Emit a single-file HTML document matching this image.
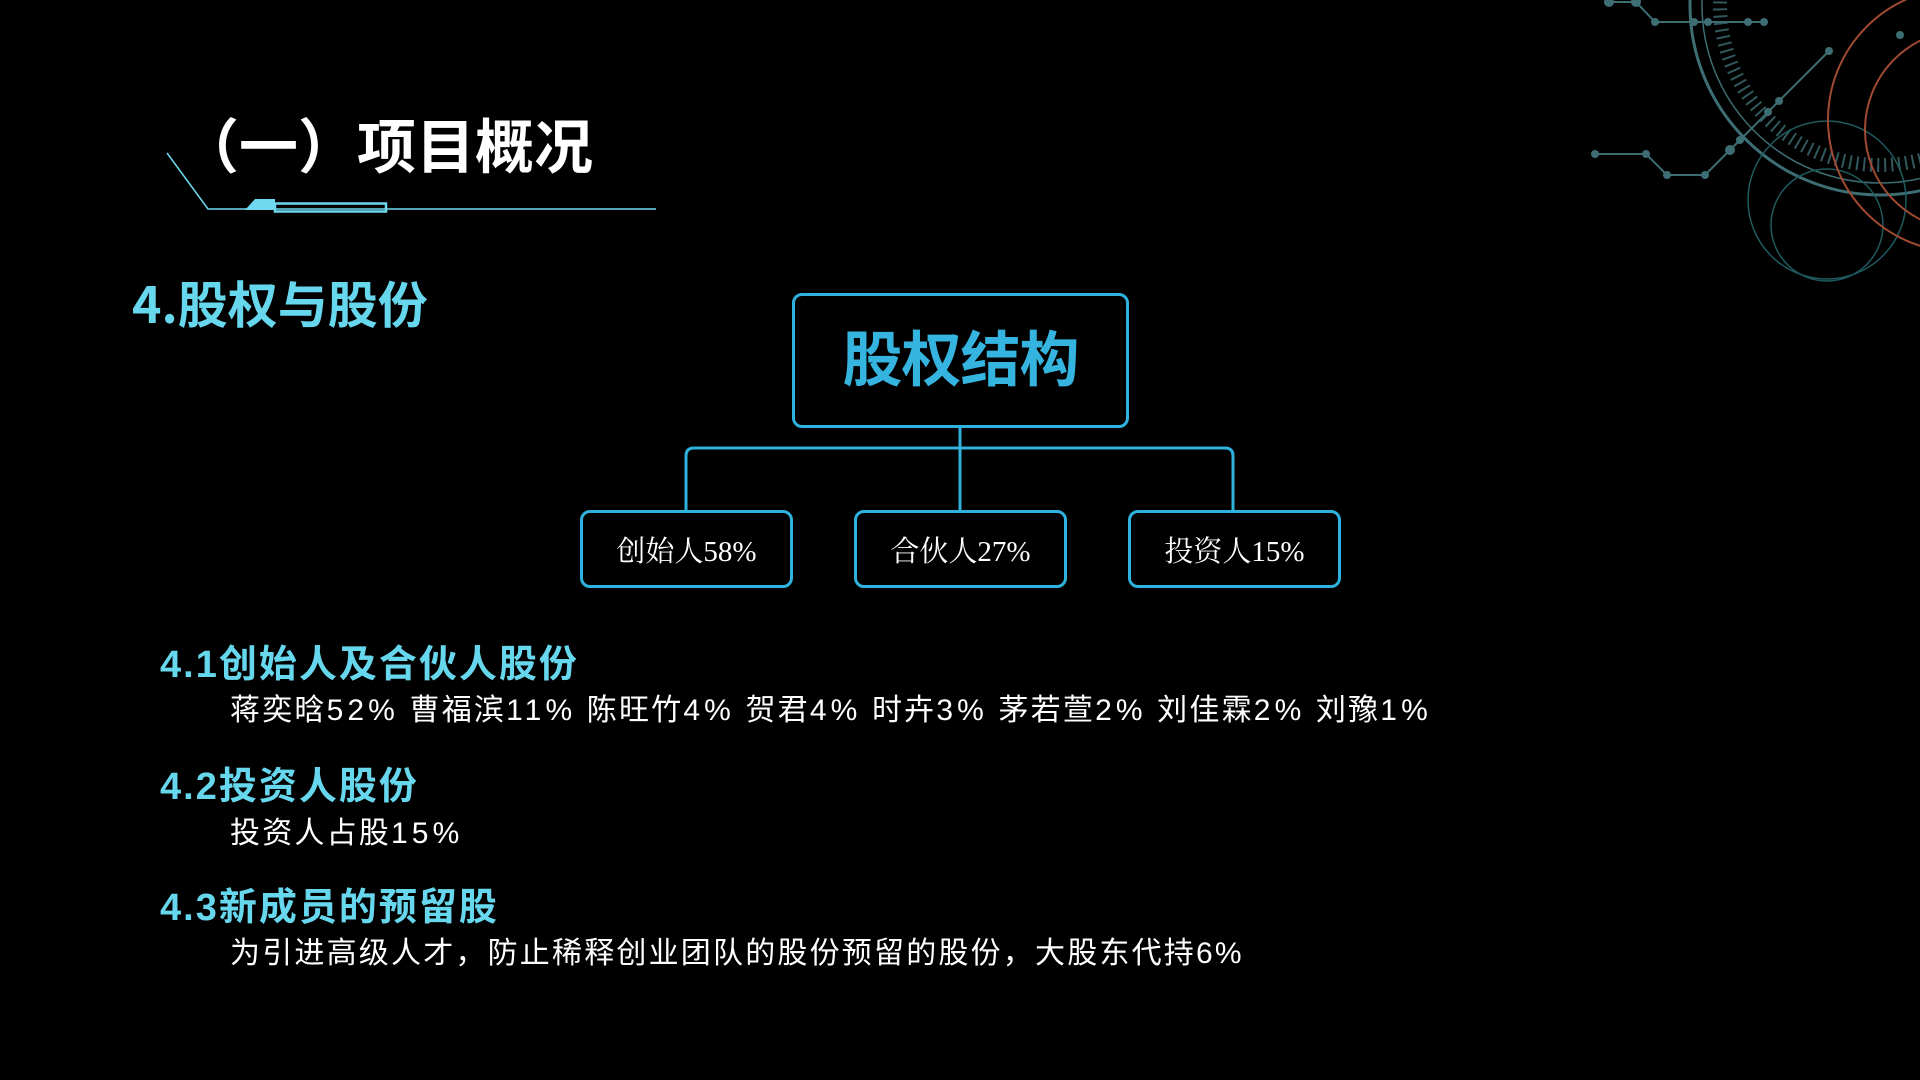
<!DOCTYPE html>
<html><head><meta charset="utf-8"><style>
html,body{margin:0;padding:0;background:#000;}
body{width:1920px;height:1080px;position:relative;overflow:hidden;font-family:"Liberation Sans","Noto Sans CJK SC",sans-serif;}
.t{position:absolute;white-space:nowrap;line-height:1;}
.h{color:#67d7ee;font-weight:700;font-size:38px;letter-spacing:2px;left:160px;}
.b{color:#fff;font-size:30px;letter-spacing:2.2px;left:230px;}
.b i{font-style:normal;letter-spacing:4.1px;}
.box{position:absolute;border:3px solid #2fb2de;border-radius:10px;box-sizing:border-box;display:flex;align-items:center;justify-content:center;}
.sm{color:#fff;font-family:"Liberation Serif","Noto Serif CJK SC",serif;font-size:29px;}
</style></head><body>
<svg width="1920" height="1080" style="position:absolute;left:0;top:0">
 <g fill="none" stroke="#6fd9ef">
  <polyline points="167,153 208,209 656,209" stroke-width="1.5"/>
  <rect x="275" y="203.5" width="111" height="8" stroke-width="2.5"/>
 </g>
 <polygon points="245,210 255,199 275,199 275,210" fill="#6fd9ef"/>
 <g fill="none" stroke="#2fb2de" stroke-width="3">
  <line x1="960" y1="427" x2="960" y2="510"/>
  <path d="M686 510 V456 q0 -8 8 -8 H1225 q8 0 8 8 V510"/>
 </g>
 <g stroke="#3d6e74" fill="#3d6e74">
  <circle cx="1880" cy="5" r="190" fill="none" stroke-width="3"/>
  <circle cx="1880" cy="5" r="178" fill="none" stroke-width="1.5"/>
  <circle cx="1880" cy="5" r="160" fill="none" stroke-width="14" stroke-dasharray="2 5" opacity="0.8"/>
  <g stroke-width="2.5" fill="none"><circle cx="1827" cy="200" r="79" stroke="#1f5a5e" stroke-width="1.5"/><circle cx="1827" cy="225" r="56" stroke="#1f5a5e" stroke-width="1.5"/></g>
  <g stroke-width="2">
   <polyline points="1609,2 1636,2 1655,22 1764,22" fill="none"/>
   <polyline points="1829,51 1730,150" fill="none"/>
   <polyline points="1595,154 1646,154 1667,175 1705,175 1730,150" fill="none"/>
  </g>
  <g stroke="none">
   <circle cx="1609" cy="2" r="5"/><circle cx="1636" cy="2" r="5"/><circle cx="1655" cy="22" r="4"/><circle cx="1694" cy="22" r="4"/><circle cx="1708" cy="22" r="4"/><circle cx="1748" cy="22" r="4"/><circle cx="1764" cy="22" r="4"/>
   <circle cx="1829" cy="51" r="4"/><circle cx="1779" cy="101" r="4"/><circle cx="1768" cy="112" r="4"/><circle cx="1740" cy="140" r="4"/><circle cx="1730" cy="150" r="5"/>
   <circle cx="1595" cy="154" r="4"/><circle cx="1646" cy="154" r="4"/><circle cx="1667" cy="175" r="4"/><circle cx="1705" cy="175" r="4"/><circle cx="1900" cy="35" r="4"/>
  </g>
 </g>
 <g fill="none" stroke="#a04a33" stroke-width="2">
  <circle cx="1960" cy="120" r="132"/>
  <circle cx="1965" cy="130" r="100"/>
 </g>
</svg>

<div class="t" style="left:180px;top:113px;font-size:59px;font-weight:700;color:#fff;font-family:'Noto Sans CJK SC',sans-serif;">（一）项目概况</div>
<div class="t" style="left:132px;top:277px;font-size:50px;font-weight:700;color:#67d7ee;font-family:'Noto Sans CJK SC',sans-serif;">4.股权与股份</div>

<div class="box" style="left:792px;top:293px;width:337px;height:135px;"><span style="color:#36b4e0;font-weight:700;font-size:60px;line-height:1;letter-spacing:-1px;">股权结构</span></div>
<div class="box" style="left:580px;top:510px;width:213px;height:78px;"><span class="sm">创始人58%</span></div>
<div class="box" style="left:854px;top:510px;width:213px;height:78px;"><span class="sm">合伙人27%</span></div>
<div class="box" style="left:1128px;top:510px;width:213px;height:78px;"><span class="sm">投资人15%</span></div>

<div class="t h" style="top:646px;">4.1创始人及合伙人股份</div>
<div class="t b" style="top:696px;">蒋奕晗<i>52%</i> 曹福滨<i>11%</i> 陈旺竹<i>4%</i> 贺君<i>4%</i> 时卉<i>3%</i> 茅若萱<i>2%</i> 刘佳霖<i>2%</i> 刘豫<i>1%</i></div>
<div class="t h" style="top:768px;">4.2投资人股份</div>
<div class="t b" style="top:819px;">投资人占股<i>15%</i></div>
<div class="t h" style="top:889px;">4.3新成员的预留股</div>
<div class="t b" style="top:939px;">为引进高级人才，防止稀释创业团队的股份预留的股份，大股东代持6%</div>
</body></html>
